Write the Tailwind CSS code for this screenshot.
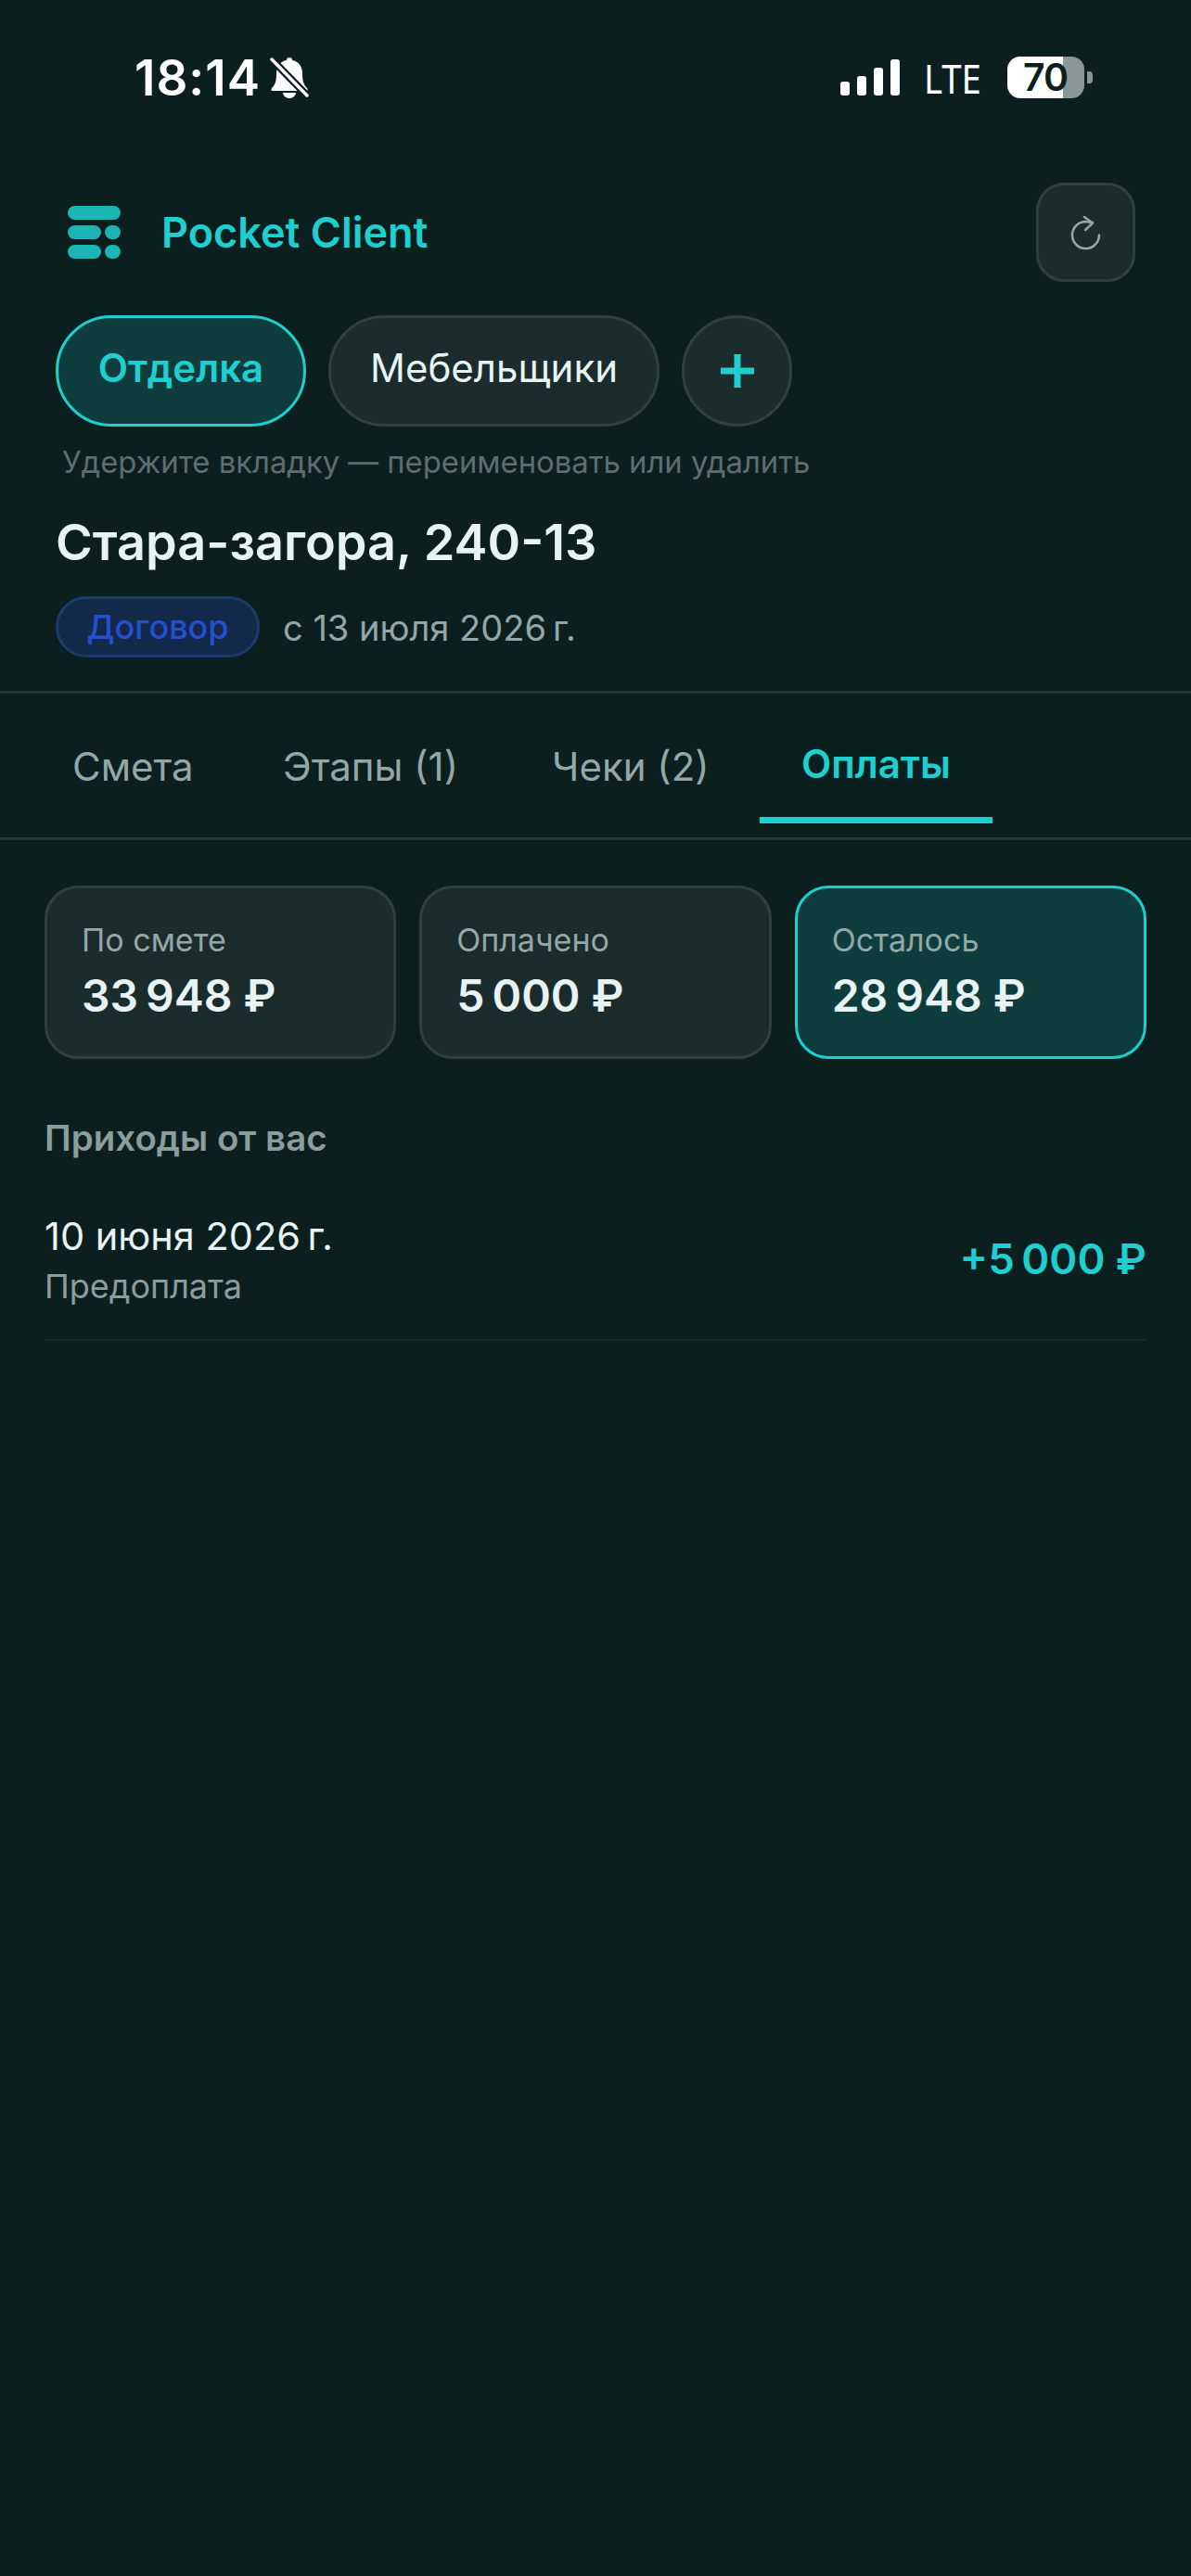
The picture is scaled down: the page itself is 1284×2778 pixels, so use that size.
<!DOCTYPE html>
<html lang="en">
<head>
    <meta charset="UTF-8">
    <meta name="viewport" content="width=device-width, initial-scale=1.0">
    <title>Pocket Client</title>
    <script src="https://cdn.jsdelivr.net/npm/@tailwindcss/browser@4"></script>
</head>
<body class="bg-[#0c1f1f] font-['Inter',sans-serif]">
    <div class="w-[1284px] h-[2778px] overflow-hidden">
        <!-- status bar -->
        <div class="h-[197px] pl-[145px] pr-[106px] pt-[60px] flex justify-between items-start">
            <div class="flex items-center gap-[10px] h-[48px]">
                <span class="text-[53px] leading-[48px] font-semibold text-white tracking-[1px]">18:14</span>
                <svg width="42" height="46" viewBox="0 0 42 46">
                    <path d="M21 1c-2 0-3 1-3 3-7 1-11 7-11 14 0 8-1 12-5 16-1 1-1 3 1 3h36c2 0 2-2 1-3-4-4-5-8-5-16 0-7-4-13-11-14 0-2-1-3-3-3z" fill="#fff"/>
                    <path d="M14 39a7 6 0 0 0 14 0z" fill="#fff"/>
                    <path d="M2 3 40 42" stroke="#0c1f1f" stroke-width="8"/>
                    <path d="M2 3 40 42" stroke="#fff" stroke-width="3.500" stroke-linecap="round"/>
                </svg>
            </div>
            <div class="flex items-center h-[46px]">
                <div class="flex items-end gap-[8px] h-[39px]">
                    <div class="w-[10px] h-[15px] rounded-[3px] bg-white"></div>
                    <div class="w-[10px] h-[21px] rounded-[3px] bg-white"></div>
                    <div class="w-[10px] h-[30px] rounded-[3px] bg-white"></div>
                    <div class="w-[10px] h-[39px] rounded-[3px] bg-white"></div>
                </div>
                <span class="ml-[26px] -mr-[9px] mt-[2px] text-[44px] leading-[40px] font-['Noto_Sans',sans-serif] text-white scale-x-[0.87] origin-left">LTE</span>
                <div class="ml-[28px] w-[83px] h-[45px] rounded-[14px] bg-[linear-gradient(90deg,#ffffff_72%,#8a9795_72%)] flex items-center pl-[17px]">
                    <span class="text-[41px] leading-[45px] font-semibold text-[#0c1f1f] tracking-[-1px]">70</span>
                </div>
                <div class="ml-[3px] w-[6px] h-[13px] rounded-r-[4px] bg-[#8a9795]"></div>
            </div>
        </div>

        <!-- header -->
        <div class="pl-[73px] pr-[60px] flex items-center justify-between">
            <div class="flex items-center gap-[44px]">
                <div class="flex flex-col gap-[6px] w-[57px]">
                    <div class="h-[15px] rounded-full bg-[#1cb5b5]"></div>
                    <div class="flex gap-[4px]">
                        <div class="h-[15px] w-[36px] rounded-full bg-[#1cb5b5]"></div>
                        <div class="h-[15px] w-[17px] rounded-full bg-[#1cb5b5]"></div>
                    </div>
                    <div class="flex gap-[4px]">
                        <div class="h-[15px] w-[36px] rounded-full bg-[#1cb5b5]"></div>
                        <div class="h-[15px] w-[17px] rounded-full bg-[#1cb5b5]"></div>
                    </div>
                </div>
                <span class="text-[45px] leading-[54px] font-semibold text-[#1fcfcf]">Pocket Client</span>
            </div>
            <div class="w-[107px] h-[107px] rounded-[30px] bg-[#1b2c2c] border-[3px] border-[#304040] flex items-center justify-center">
                <svg width="36" height="38" viewBox="0 0 36 38" fill="none" stroke="#93a8a6" stroke-width="2.500" stroke-linecap="round" stroke-linejoin="round">
                    <path d="M32 21.500A14.500 14.500 0 1 1 17.500 7L25 8"/>
                    <path d="M16 2l9 6.500L17 16"/>
                </svg>
            </div>
        </div>

        <!-- tabs -->
        <div class="mt-[36px] px-[60px] flex gap-[24px]">
            <div class="h-[120px] w-[270px] rounded-full bg-[#0f3d3e] border-[3px] border-[#1fcfcf] flex items-center justify-center">
                <span class="text-[42px] font-semibold text-[#1fcfcf] -mt-[8px]">Отделка</span>
            </div>
            <div class="h-[120px] w-[357px] rounded-full bg-[#1b2c2c] border-[3px] border-[#304040] flex items-center justify-center">
                <span class="text-[42px] text-[#e8f4f4] -mt-[8px]">Мебельщики</span>
            </div>
            <div class="h-[120px] w-[119px] rounded-full bg-[#1b2c2c] border-[3px] border-[#304040] flex items-center justify-center">
                <svg width="36" height="36" viewBox="0 0 36 36" fill="none" stroke="#1fcfcf" stroke-width="7"><path d="M18 0v36M0 18h36"/></svg>
            </div>
        </div>
        <div class="mt-[18px] px-[67px] text-[32.800px] leading-[40px] text-[#5d6e6e]">Удержите вкладку — переименовать или удалить</div>
        <div class="mt-[34px] px-[60px] text-[54px] leading-[66px] font-semibold text-[#e8f4f4]">Стара-загора, 240-13</div>
        <div class="mt-[25px] px-[60px] flex items-center gap-[25px]">
            <div class="h-[66px] w-[220px] rounded-full bg-[#12294a] border-[3px] border-[#1c3a6a] flex items-center justify-center">
                <span class="text-[36px] font-medium text-[#2450d0]">Договор</span>
            </div>
            <span class="text-[38px] text-[#93a8a6] mt-[2px]">с 13 июля 2026&#8239;г.</span>
        </div>

        <!-- section tabs -->
        <div class="mt-[36px] border-y-[3px] border-[#253737] h-[161px] flex pl-[78px]">
            <div class="w-[227px] pt-[54px] text-[42px] leading-[50px] text-[#93a8a6]">Смета</div>
            <div class="w-[290px] pt-[54px] text-[42px] leading-[50px] text-[#93a8a6]">Этапы (1)</div>
            <div class="w-[224px] pt-[54px] text-[42px] leading-[50px] text-[#93a8a6]">Чеки (2)</div>
            <div class="w-[251px] h-[140px] pt-[51px] text-[42px] leading-[50px] font-semibold text-[#1fcfcf] text-center border-b-[7px] border-[#1fcfcf]">Оплаты</div>
        </div>

        <!-- totals -->
        <div class="mt-[49px] px-[48px] grid grid-cols-3 gap-[25px]">
            <div class="h-[187px] rounded-[36px] bg-[#1b2c2c] border-[3px] border-[#304040] pl-[37px] pt-[36px]">
                <div class="text-[34px] leading-[40px] text-[#93a8a6]">По смете</div>
                <div class="mt-[12px] text-[48px] leading-[56px] font-semibold text-[#e8f4f4]">33&#8239;948 ₽</div>
            </div>
            <div class="h-[187px] rounded-[36px] bg-[#1b2c2c] border-[3px] border-[#304040] pl-[37px] pt-[36px]">
                <div class="text-[34px] leading-[40px] text-[#93a8a6]">Оплачено</div>
                <div class="mt-[12px] text-[48px] leading-[56px] font-semibold text-[#e8f4f4]">5&#8239;000 ₽</div>
            </div>
            <div class="h-[187px] rounded-[36px] bg-[#0f3d3e] border-[3px] border-[#1fcfcf] pl-[37px] pt-[36px]">
                <div class="text-[34px] leading-[40px] text-[#93a8a6]">Осталось</div>
                <div class="mt-[12px] text-[48px] leading-[56px] font-semibold text-[#e8f4f4]">28&#8239;948 ₽</div>
            </div>
        </div>

        <!-- payments -->
        <div class="mt-[63px] px-[48px] text-[38.500px] leading-[44px] font-semibold text-[#8a9e9c]">Приходы от вас</div>
        <div class="mt-[59px] mx-[48px] pb-[36px] border-b-[2px] border-[#142a2a] flex items-center justify-between">
            <div>
                <div class="text-[41.500px] leading-[50px] text-[#e8f4f4]">10 июня 2026&#8239;г.</div>
                <div class="mt-[8px] text-[36px] leading-[42px] text-[#8a9e9c]">Предоплата</div>
            </div>
            <div class="text-[45.500px] font-semibold text-[#1fcfcf]">+5&#8239;000 ₽</div>
        </div>
    </div>
</body>
</html>
